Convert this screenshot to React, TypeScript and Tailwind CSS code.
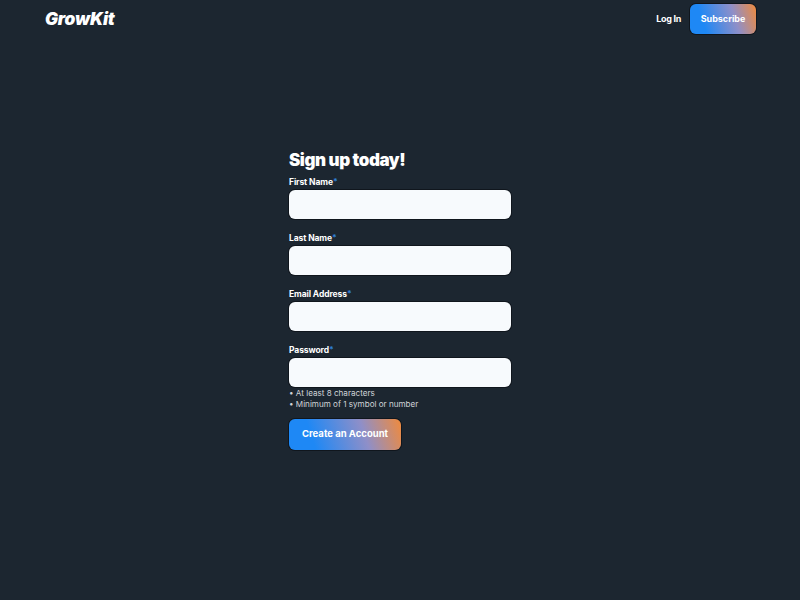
import React from 'react';

const fields = ['First Name', 'Last Name', 'Email Address', 'Password'];

const gradient = 'bg-[linear-gradient(72deg,#1e88f5_22%,#8f8fc8_66%,#f08a3c_100%)]';

const App: React.FC = () => {
  return (
    <div className="min-h-[600px] bg-[#1c2630] text-white font-['Inter','Noto_Sans',sans-serif]">
      {/* Header */}
      <header className="flex items-center justify-between pl-[45px] pr-[44px] pt-[4px]">
        <span className="text-[17.3px] leading-[30px] font-black italic tracking-[-0.2px]">GrowKit</span>
        <nav className="flex items-center gap-[9px]">
          <a className="text-[9px] font-bold tracking-[-0.3px]">Log In</a>
          <button className={`w-[66px] h-[30px] rounded-[6px] ring-1 ring-[#10161d] text-[9px] font-bold ${gradient}`}>
            Subscribe
          </button>
        </nav>
      </header>

      {/* Sign up form */}
      <main className="w-[222px] mx-[289px] mt-[113px]">
        <h1 className="text-[17px] leading-[26px] font-black tracking-[-0.45px]">Sign up today!</h1>
        <form className="mt-[3px] flex flex-col gap-[13px]">
          {fields.map((field) => (
            <div key={field}>
              <label className="block pb-[2px] text-[8.5px] leading-[12px] font-bold tracking-[-0.1px]">
                {field}
                <span className="text-[#2f7fd6]">*</span>
              </label>
              <input className="block w-full h-[29px] rounded-[6px] bg-[#f7fafd] ring-1 ring-[#10161d]" />
            </div>
          ))}
        </form>
        <ul className="mt-[1px] text-[8.1px] leading-[11px] text-[#d0d4d8]">
          <li>• At least 8 characters</li>
          <li>• Minimum of 1 symbol or number</li>
        </ul>
        <button className={`mt-[9px] block w-[112px] h-[31px] rounded-[6px] ring-1 ring-[#10161d] text-[9.5px] font-bold ${gradient}`}>
          Create an Account
        </button>
      </main>
    </div>
  );
};

export default App;
